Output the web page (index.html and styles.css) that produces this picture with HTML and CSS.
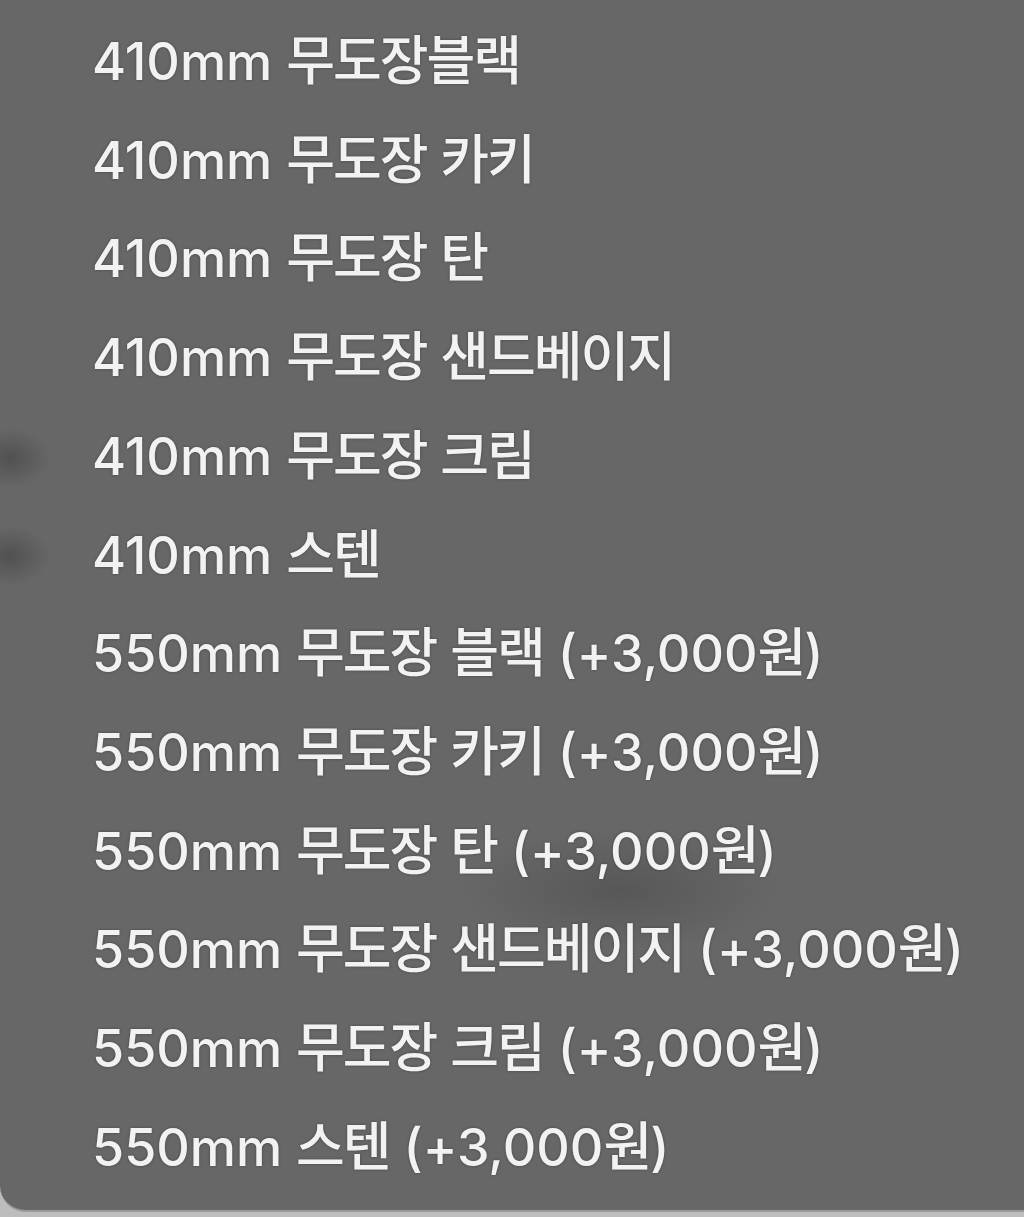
FILE: index.html
```html
<!DOCTYPE html>
<html lang="ko">
<head>
  <meta charset="UTF-8">
  <title>옵션 선택</title>
  <link rel="stylesheet" href="styles.css">
</head>
<body>

  <!-- hangul words are wrapped so they can be tracked tighter than the latin part -->
  <ul class="menu">
    <li>410mm <span class="ko">무도장블랙</span></li>
    <li>410mm <span class="ko">무도장</span> <span class="ko">카키</span></li>
    <li>410mm <span class="ko">무도장</span> <span class="ko">탄</span></li>
    <li>410mm <span class="ko">무도장</span> <span class="ko">샌드베이지</span></li>
    <li>410mm <span class="ko">무도장</span> <span class="ko">크림</span></li>
    <li>410mm <span class="ko">스텐</span></li>
    <li>550mm <span class="ko">무도장</span> <span class="ko">블랙</span> (+3,000<span class="ko">원</span>)</li>
    <li>550mm <span class="ko">무도장</span> <span class="ko">카키</span> (+3,000<span class="ko">원</span>)</li>
    <li>550mm <span class="ko">무도장</span> <span class="ko">탄</span> (+3,000<span class="ko">원</span>)</li>
    <li>550mm <span class="ko">무도장</span> <span class="ko">샌드베이지</span> (+3,000<span class="ko">원</span>)</li>
    <li>550mm <span class="ko">무도장</span> <span class="ko">크림</span> (+3,000<span class="ko">원</span>)</li>
    <li>550mm <span class="ko">스텐</span> (+3,000<span class="ko">원</span>)</li>
  </ul>

</body>
</html>
```

FILE: styles.css
```css
body {
  margin: 0;
  background-color: #bdbdbd;
  font-family: Inter, "Noto Sans CJK KR", sans-serif;
}

/* popup list, vibrancy-style grey with faint shapes showing through */
.menu {
  list-style: none;
  margin: 0;
  height: 1212px;
  box-sizing: border-box;
  padding: 13px 0 0 92px;
  background-color: #676767;
  background-image:
    radial-gradient(ellipse 40px 30px at 10px 458px, rgba(40,40,40,0.35), transparent),
    radial-gradient(ellipse 40px 30px at 10px 556px, rgba(40,40,40,0.35), transparent),
    radial-gradient(ellipse 160px 60px at 620px 890px, rgba(40,40,40,0.25), transparent);
  border-bottom: 2px solid #9a9a9a;
  border-bottom-left-radius: 26px;
}

.menu li {
  font-size: 52px;
  font-weight: 500;
  line-height: 98.7px;
  color: #f2f2f2;
  white-space: nowrap;
  text-shadow: 0 0 3px rgba(0,0,0,0.35);
}

.ko {
  font-family: "Noto Sans CJK KR", sans-serif;
  font-size: 53px;
  line-height: 1;
  letter-spacing: -2px;
}
```
